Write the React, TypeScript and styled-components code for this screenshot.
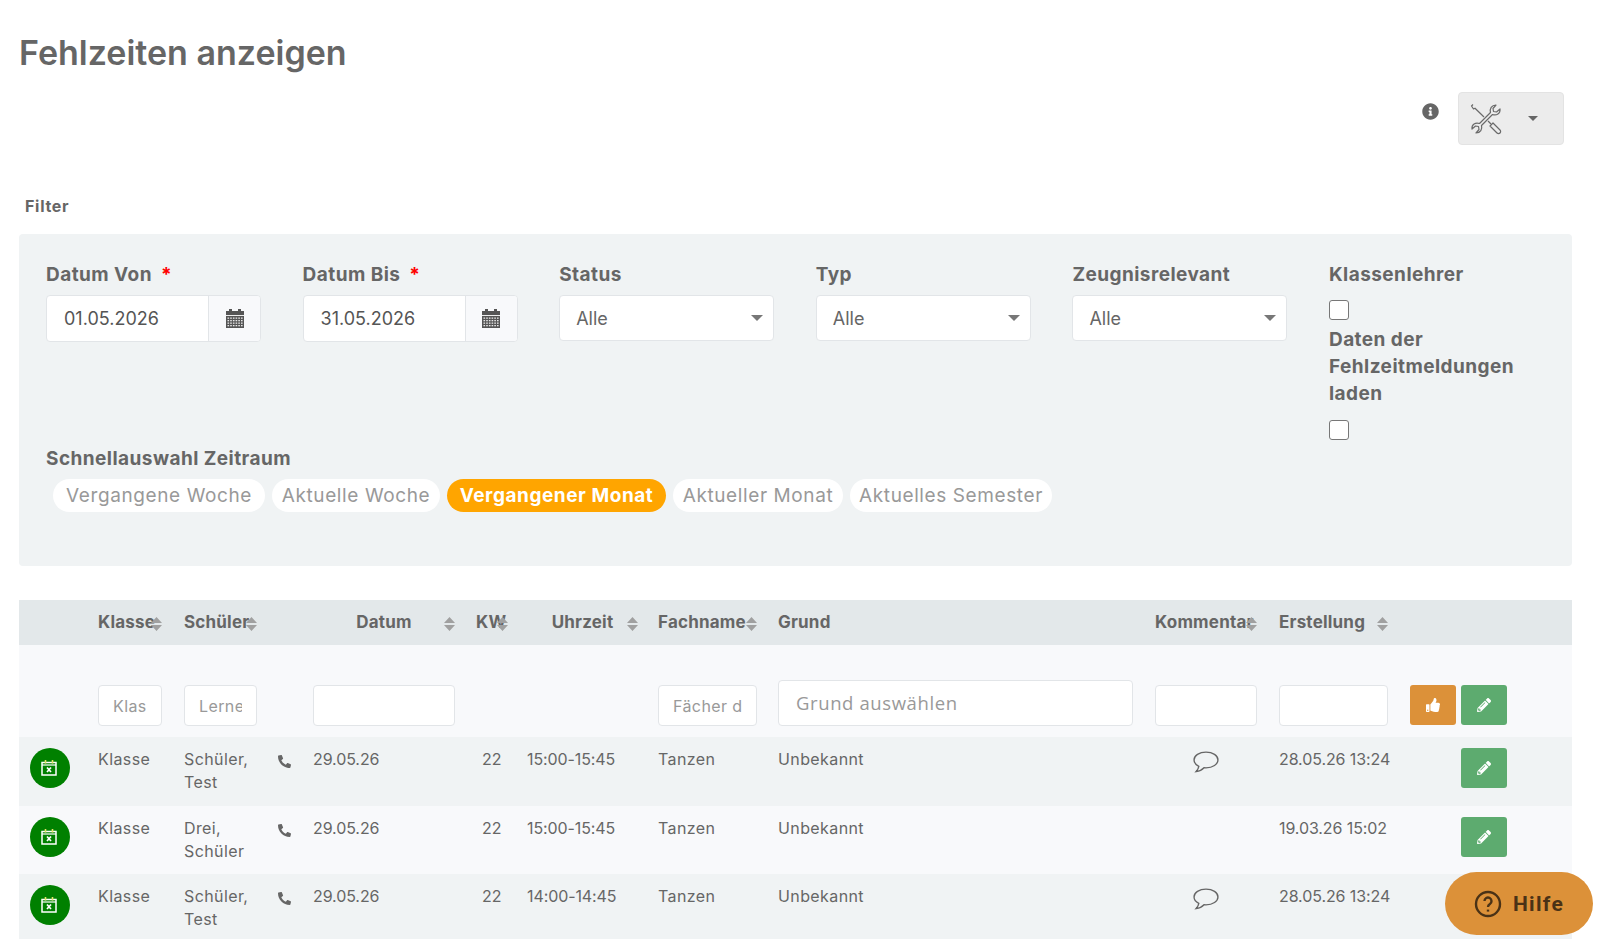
import React from "react";
import styled, { createGlobalStyle } from "styled-components";
import { FaInfoCircle, FaPhone, FaThumbsUp, FaPencilAlt } from "react-icons/fa";

const Global = createGlobalStyle`
  html, body { margin: 0; padding: 0; height: 100%; overflow: hidden; background: #fff; }
  body { font-family: Inter, "Open Sans", "Liberation Sans", sans-serif; color: #666; font-size: 16px; }
  * { box-sizing: border-box; }
`;

const Page = styled.div`
  padding: 30px 31px 0 19px;
  height: 939px;
  overflow: hidden;
`;
const Title = styled.h1`
  margin: 0;
  font-size: 34px;
  line-height: 46px;
  font-weight: 600;
  color: #666;
`;
const TopTools = styled.div`
  display: flex;
  justify-content: flex-end;
  align-items: flex-start;
  gap: 19px;
  margin: 16px 8px 0 0;
  height: 102px;
`;
const InfoWrap = styled.span`
  display: flex;
  margin-top: 11px;
  font-size: 17px;
  color: #666;
`;
const ToolButton = styled.div`
  width: 106px;
  height: 53px;
  background: #ececec;
  border: 1px solid #e3e3e3;
  border-radius: 4px;
  display: flex;
  align-items: center;
  padding-left: 11px;
  gap: 26px;
  color: #666;
`;
const ToolsSvg = styled.svg`
  width: 32px;
  height: 32px;
  fill: none;
  stroke: #6a6a6a;
  stroke-width: 1.2;
  stroke-linejoin: round;
`;
const Caret = styled.span`
  width: 0;
  height: 0;
  border-left: 5px solid transparent;
  border-right: 5px solid transparent;
  border-top: 5px solid #666;
`;
const SelectCaret = styled.span`
  width: 0;
  height: 0;
  margin-right: -6px;
  border-left: 6px solid transparent;
  border-right: 6px solid transparent;
  border-top: 6px solid #777;
`;
const FilterHeading = styled.div`
  font-size: 16px;
  font-weight: 700;
  letter-spacing: 0.7px;
  line-height: 24px;
  padding-left: 6px;
  margin: 0 0 16px;
  color: #666;
`;
const Panel = styled.section`
  background: #f0f3f4;
  border-radius: 4px;
  height: 332px;
  padding: 27px 27px 0;
  margin-bottom: 34px;
`;
const FieldGrid = styled.div`
  display: grid;
  grid-template-columns: repeat(6, 215px);
  column-gap: 41.6px;
  height: 157px;
`;
const Field = styled.div`
  display: flex;
  flex-direction: column;
`;
const Label = styled.label`
  font-size: 19px;
  font-weight: 700;
  letter-spacing: 0.45px;
  line-height: 27px;
  height: 34px;
  color: #666;
`;
const CheckLabel = styled(Label)`
  height: 39px;
`;
const LabelBlock = styled(Label)`
  height: auto;
`;
const Star = styled.span`
  color: #f00;
  margin-left: 4px;
`;
const DateBox = styled.div`
  display: flex;
  height: 47px;
  width: 215px;
  background: #fff;
  border: 1px solid #e2e5e8;
  border-radius: 4px;
  overflow: hidden;
`;
const DateValue = styled.div`
  flex: 1;
  padding-left: 17px;
  font-size: 18px;
  line-height: 45px;
  color: #555;
`;
const DateAddon = styled.div`
  width: 52px;
  background: #f8f9fb;
  border-left: 1px solid #e2e5e8;
  display: flex;
  align-items: center;
  justify-content: center;
`;
const SelectBox = styled.div`
  height: 46px;
  width: 215px;
  background: #fff;
  border: 1px solid #e2e5e8;
  border-radius: 4px;
  padding: 0 16px;
  display: flex;
  align-items: center;
  justify-content: space-between;
  font-size: 18px;
  color: #666;
`;
const Check = styled.span`
  display: block;
  width: 20px;
  height: 20px;
  background: #fff;
  border: 1px solid #777;
  border-radius: 3px;
  margin: 0 0 6px;
`;
const CheckLast = styled(Check)`
  margin: 13px 0 0;
`;
const QuickLabel = styled.div`
  font-size: 19px;
  font-weight: 700;
  letter-spacing: 0.45px;
  line-height: 27px;
  margin: 27px 0 7px;
  color: #666;
`;
const Pills = styled.div`
  display: flex;
  gap: 7px;
  padding-left: 7px;
`;
const Pill = styled.span<{ $w: number; $active?: boolean }>`
  width: ${(p) => p.$w}px;
  height: 33px;
  border-radius: 17px;
  text-align: center;
  line-height: 33px;
  font-size: 19px;
  white-space: nowrap;
  letter-spacing: ${(p) => (p.$active ? "0.55px" : "0.6px")};
  background: ${(p) => (p.$active ? "#ffa500" : "#fff")};
  color: ${(p) => (p.$active ? "#fff" : "#999")};
  font-weight: ${(p) => (p.$active ? 700 : 400)};
`;

const COLS = "79px 86px 94px 35px 163px 51px 131px 120px 377px 124px 131px 162px";
const Row = styled.div<{ $bg: string; $h: number }>`
  display: grid;
  grid-template-columns: ${COLS};
  height: ${(p) => p.$h}px;
  background: ${(p) => p.$bg};
`;
const HeadCell = styled.div<{ $center?: boolean; $w?: number }>`
  position: relative;
  font-size: 17px;
  font-weight: 700;
  letter-spacing: 0.2px;
  line-height: 44px;
  color: #666;
  white-space: nowrap;
  width: ${(p) => (p.$w ? `${p.$w}px` : "auto")};
  text-align: ${(p) => (p.$center ? "center" : "left")};
`;
const SortMark = styled.svg<{ $r: number }>`
  position: absolute;
  right: ${(p) => p.$r}px;
  top: 17px;
  width: 11px;
  height: 14px;
  fill: #a0a0a0;
`;
const FilterCell = styled.div<{ $top?: number }>`
  padding-top: ${(p) => p.$top ?? 40}px;
`;
const FilterInput = styled.input<{ $w: number }>`
  display: block;
  width: ${(p) => p.$w}px;
  height: 41px;
  background: #fff;
  border: 1px solid #e2e5e8;
  border-radius: 4px;
  padding: 0 14px;
  margin: 0;
  outline: none;
  font-family: inherit;
  font-size: 16px;
  letter-spacing: 0.4px;
  color: #666;
  &::placeholder { color: #999; opacity: 1; }
`;
const GrundInput = styled.div`
  width: 355px;
  height: 46px;
  background: #fff;
  border: 1px solid #e2e5e8;
  border-radius: 4px;
  padding-left: 17px;
  font-family: "Open Sans", sans-serif;
  line-height: 43px;
  font-size: 18.5px;
  letter-spacing: 0.6px;
  color: #999;
`;
const Actions = styled.div`
  display: flex;
  gap: 5px;
`;
const ActButton = styled.div<{ $bg: string }>`
  width: 46px;
  height: 40px;
  border-radius: 3px;
  background: ${(p) => p.$bg};
  color: #fff;
  display: flex;
  align-items: center;
  justify-content: center;
  font-size: 14px;
`;
const ActionCell = styled.div`
  padding: 11px 0 0 51px;
`;
const Cell = styled.div<{ $wide?: boolean; $inset?: number }>`
  padding: 11px 0 0 ${(p) => p.$inset ?? 0}px;
  font-size: 16px;
  line-height: 23px;
  color: #666;
  letter-spacing: ${(p) => (p.$wide ? "0.4px" : "-0.1px")};
  white-space: pre-line;
`;
const CommentCell = styled.div`
  padding-top: 14px;
  width: 102px;
`;
const CommentSvg = styled.svg`
  display: block;
  margin: 0 auto;
  width: 26px;
  height: 22px;
  fill: none;
  stroke: #666;
  stroke-width: 1.3;
`;
const PhoneCell = styled(Cell)`
  padding-top: 15px;
  font-size: 13px;
  svg { transform: scaleX(-1); }
`;
const StatusCell = styled.div`
  padding: 11px 0 0 11px;
`;
const StatusDot = styled.div`
  width: 40px;
  height: 40px;
  border-radius: 50%;
  background: #008000;
  display: flex;
  align-items: center;
  justify-content: center;
  padding: 0 2px 1px 0;
`;
const Help = styled.div`
  position: fixed;
  left: 1445px;
  top: 872px;
  width: 148px;
  height: 63px;
  border-radius: 32px;
  background: #dc9139;
  color: #4a3216;
  display: flex;
  align-items: center;
  justify-content: center;
  gap: 11px;
  font-family: Roboto, sans-serif;
  font-size: 21px;
  font-weight: 700;
  letter-spacing: 1.3px;
`;

const Sort = ({ r }: { r: number }) => (
  <SortMark $r={r} viewBox="0 0 11 14">
    <path d="M5.5 0 L11 6 H0 Z M5.5 14 L0 8 H11 Z" />
  </SortMark>
);
const CalX = () => (
  <svg width="16" height="17" viewBox="0 0 16 17" fill="none">
    <rect x="1" y="3.5" width="14" height="12.5" stroke="#fff" strokeWidth="1.5" />
    <path d="M1 6H15" stroke="#fff" strokeWidth="1.2" />
    <path d="M4.5 1v3.5M11.5 1v3.5" stroke="#e6e36a" strokeWidth="1.6" />
    <path d="M6 8.5l4 4.5M10 8.5l-4 4.5" stroke="#fff" strokeWidth="1.7" />
  </svg>
);
const CalendarDots = () => (
  <svg width="18" height="19" viewBox="0 0 18 19">
    <rect x="0" y="2" width="18" height="17" fill="#555" />
    <rect x="3" y="0" width="3" height="4" fill="#555" />
    <rect x="12" y="0" width="3" height="4" fill="#555" />
    <rect x="0" y="6" width="18" height="1" fill="#eee" />
    {[8.5, 11, 13.5, 16].map((y) =>
      [1.5, 4.2, 6.9, 9.6, 12.3, 15].map((x) => (
        <rect key={`${x}-${y}`} x={x} y={y} width="1.6" height="1.3" fill="#e8e8e8" />
      ))
    )}
  </svg>
);
const Tools = () => (
  <ToolsSvg viewBox="0 0 32 32">
    <path d="M20.5 9.5C19.5 6 21.5 2 26 2L23 5.5L23.5 8.5L26.5 9L30 6C30.5 10.5 26.5 13 22.5 11.5L11.5 22.5C12.5 26 10.5 30 6 30L9 26.5L8.5 23.5L5.5 23L2 26C1.5 21.5 5.5 19 9.5 20.5Z" />
    <path d="M3 1.5L1.5 3L3.5 6L5 5.2L14 14M18 18L21 21" />
    <path d="M20 23L23 20L30 27A2.1 2.1 0 0 1 27 30Z" />
  </ToolsSvg>
);
const Comment = () => (
  <CommentSvg viewBox="0 0 25 21">
    <path d="M12.5 1C6 1 1 4.3 1 8.5c0 2.6 1.9 4.8 4.6 6.2-.3 1.7-1.2 3.5-2.6 5 3.2-.4 6-1.9 7.6-3.7.6.1 1.2.1 1.9.1C19 16 24 12.7 24 8.5S19 1 12.5 1z" />
  </CommentSvg>
);

const rows = [
  { name: "Schüler,\nTest", time: "15:00-15:45", comment: true, created: "28.05.26 13:24", bg: "#f0f3f4", h: 69 },
  { name: "Drei,\nSchüler", time: "15:00-15:45", comment: false, created: "19.03.26 15:02", bg: "#f8f9fb", h: 68 },
  { name: "Schüler,\nTest", time: "14:00-14:45", comment: true, created: "28.05.26 13:24", bg: "#f0f3f4", h: 68 },
];

export default function App() {
  return (
    <Page>
      <Global />
      <Title>Fehlzeiten anzeigen</Title>
      <TopTools>
        <InfoWrap><FaInfoCircle /></InfoWrap>
        <ToolButton>
          <Tools />
          <Caret />
        </ToolButton>
      </TopTools>
      <FilterHeading>Filter</FilterHeading>
      <Panel>
        <FieldGrid>
          <Field>
            <Label>Datum Von <Star>*</Star></Label>
            <DateBox><DateValue>01.05.2026</DateValue><DateAddon><CalendarDots /></DateAddon></DateBox>
          </Field>
          <Field>
            <Label>Datum Bis <Star>*</Star></Label>
            <DateBox><DateValue>31.05.2026</DateValue><DateAddon><CalendarDots /></DateAddon></DateBox>
          </Field>
          <Field>
            <Label>Status</Label>
            <SelectBox>Alle<SelectCaret /></SelectBox>
          </Field>
          <Field>
            <Label>Typ</Label>
            <SelectBox>Alle<SelectCaret /></SelectBox>
          </Field>
          <Field>
            <Label>Zeugnisrelevant</Label>
            <SelectBox>Alle<SelectCaret /></SelectBox>
          </Field>
          <Field>
            <CheckLabel>Klassenlehrer</CheckLabel>
            <Check />
            <LabelBlock>Daten der Fehlzeitmeldungen laden</LabelBlock>
            <CheckLast />
          </Field>
        </FieldGrid>
        <QuickLabel>Schnellauswahl Zeitraum</QuickLabel>
        <Pills>
          <Pill $w={212}>Vergangene Woche</Pill>
          <Pill $w={168}>Aktuelle Woche</Pill>
          <Pill $w={219} $active>Vergangener Monat</Pill>
          <Pill $w={170}>Aktueller Monat</Pill>
          <Pill $w={202}>Aktuelles Semester</Pill>
        </Pills>
      </Panel>
      <Row $bg="#e3e8ea" $h={45}>
        <span />
        <HeadCell $w={64}>Klasse<Sort r={0} /></HeadCell>
        <HeadCell $w={73}>Schüler<Sort r={0} /></HeadCell>
        <span />
        <HeadCell $w={142} $center>Datum<Sort r={0} /></HeadCell>
        <HeadCell $w={32}>KW<Sort r={0} /></HeadCell>
        <HeadCell $w={111} $center>Uhrzeit<Sort r={0} /></HeadCell>
        <HeadCell $w={99}>Fachname<Sort r={0} /></HeadCell>
        <HeadCell>Grund</HeadCell>
        <HeadCell $w={102}>Kommentar<Sort r={0} /></HeadCell>
        <HeadCell $w={109}>Erstellung<Sort r={0} /></HeadCell>
        <span />
      </Row>
      <Row $bg="#f8f9fb" $h={92}>
        <span />
        <FilterCell><FilterInput $w={64} placeholder="Klasse" /></FilterCell>
        <FilterCell><FilterInput $w={73} placeholder="Lernender" /></FilterCell>
        <span />
        <FilterCell><FilterInput $w={142} /></FilterCell>
        <span />
        <span />
        <FilterCell><FilterInput $w={99} placeholder="Fächer durchsuchen" /></FilterCell>
        <FilterCell $top={35}><GrundInput>Grund auswählen</GrundInput></FilterCell>
        <FilterCell><FilterInput $w={102} /></FilterCell>
        <FilterCell><FilterInput $w={109} /></FilterCell>
        <FilterCell>
          <Actions>
            <ActButton $bg="#dc9139"><FaThumbsUp /></ActButton>
            <ActButton $bg="#5dab6f"><FaPencilAlt /></ActButton>
          </Actions>
        </FilterCell>
      </Row>
      {rows.map((r, i) => (
        <Row key={i} $bg={r.bg} $h={r.h}>
          <StatusCell><StatusDot><CalX /></StatusDot></StatusCell>
          <Cell $wide>Klasse</Cell>
          <Cell $wide>{r.name}</Cell>
          <PhoneCell><FaPhone /></PhoneCell>
          <Cell>29.05.26</Cell>
          <Cell $inset={6}>22</Cell>
          <Cell>{r.time}</Cell>
          <Cell $wide>Tanzen</Cell>
          <Cell $wide>Unbekannt</Cell>
          {r.comment ? <CommentCell><Comment /></CommentCell> : <span />}
          <Cell>{r.created}</Cell>
          <ActionCell><ActButton $bg="#5dab6f"><FaPencilAlt /></ActButton></ActionCell>
        </Row>
      ))}
      <Help>
        <svg width="28" height="28" viewBox="0 0 28 28" fill="none" stroke="#4a3216" strokeWidth="2.4">
          <circle cx="14" cy="14" r="12" />
          <path d="M10.5 11a3.5 3.5 0 1 1 5.4 3c-1.2.8-1.9 1.5-1.9 3" />
          <path d="M14 19.6v2" />
        </svg>
        Hilfe
      </Help>
    </Page>
  );
}
